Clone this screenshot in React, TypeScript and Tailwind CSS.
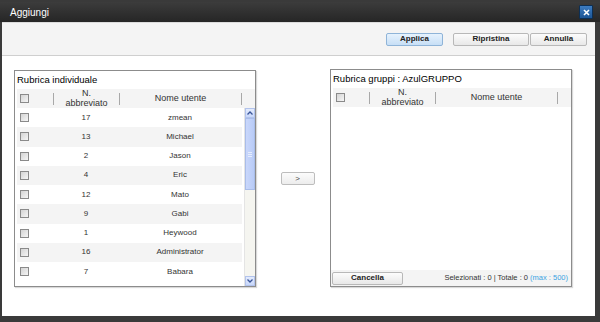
import React from 'react';

const rows = [
  { id: 17, name: 'zmean' },
  { id: 13, name: 'Michael' },
  { id: 2, name: 'Jason' },
  { id: 4, name: 'Eric' },
  { id: 12, name: 'Mato' },
  { id: 9, name: 'Gabi' },
  { id: 1, name: 'Heywood' },
  { id: 16, name: 'Administrator' },
  { id: 7, name: 'Babara' },
];

function Checkbox() {
  return (
    <div className="w-[9px] h-[9px] border border-[#8a8a8a] bg-gradient-to-br from-[#d4d4d4] to-[#f6f6f6]" />
  );
}

function Sep() {
  return <div className="w-px h-[12px] bg-[#a8a8a8]" />;
}

function Header() {
  return (
    <div className="flex items-center h-[19px] bg-[#f4f4f4] text-[9px] text-[#333] leading-[9.5px]">
      <div className="w-[36px] flex items-center pl-[3px]">
        <Checkbox />
      </div>
      <Sep />
      <div className="w-[65px] flex flex-col items-center">
        <span>N.</span>
        <span>abbreviato</span>
      </div>
      <Sep />
      <div className="w-[121px] text-center">Nome utente</div>
      <Sep />
    </div>
  );
}

function Btn({ children, w, blue }: { children: React.ReactNode; w: string; blue?: boolean }) {
  return (
    <button
      className={`${w} h-[13px] rounded-[2px] border text-[8px] font-bold text-[#222] leading-none flex items-center justify-center ${
        blue
          ? 'border-[#8fb4d8] bg-gradient-to-b from-[#e6f2fd] to-[#c7dff6]'
          : 'border-[#b8b8b8] bg-gradient-to-b from-[#fcfcfc] to-[#e8e8e8]'
      }`}
    >
      {children}
    </button>
  );
}

function Scrollbar() {
  return (
    <div className="w-[11px] flex flex-col bg-[#f5f5f0] border-l border-[#e4e4e4]">
      <div className="h-[10px] bg-gradient-to-b from-[#e3ebfd] to-[#c8d7fa] border border-[#b2c3ec] flex items-center justify-center">
        <svg width="6" height="4" viewBox="0 0 6 4">
          <path d="M0.5 3.5 L3 1 L5.5 3.5" stroke="#3a5599" strokeWidth="1.3" fill="none" />
        </svg>
      </div>
      <div className="h-[72px] bg-gradient-to-r from-[#c9d7fb] to-[#b8cbf7] border border-[#a9bde9] flex items-center justify-center">
        <div className="flex flex-col gap-[1px]">
          <div className="w-[4px] h-px bg-[#e6edfd]" />
          <div className="w-[4px] h-px bg-[#e6edfd]" />
          <div className="w-[4px] h-px bg-[#e6edfd]" />
        </div>
      </div>
      <div className="flex-1" />
      <div className="h-[10px] bg-gradient-to-b from-[#e3ebfd] to-[#c8d7fa] border border-[#b2c3ec] flex items-center justify-center">
        <svg width="6" height="4" viewBox="0 0 6 4">
          <path d="M0.5 0.5 L3 3 L5.5 0.5" stroke="#3a5599" strokeWidth="1.3" fill="none" />
        </svg>
      </div>
    </div>
  );
}

export default function App() {
  return (
    <div className="w-[600px] h-[322px] bg-[#3a3a3a] flex flex-col pt-[2px] font-['Liberation_Sans',Arial,sans-serif] overflow-hidden">
      {/* Title bar */}
      <div className="h-[20px] flex items-center justify-between pl-[10px] pr-[7px] bg-gradient-to-b from-[#3c3c3c] to-[#262626]">
        <span className="text-white text-[10px]">Aggiungi</span>
        <div className="w-[14px] h-[14px] rounded-[1px] border border-[#0c2f55] bg-gradient-to-b from-[#3d7cc0] to-[#1c5595] flex items-center justify-center">
          <svg width="7" height="7" viewBox="0 0 7 7">
            <path d="M1 1 L6 6 M6 1 L1 6" stroke="#fff" strokeWidth="1.6" />
          </svg>
        </div>
      </div>

      {/* Body */}
      <div className="flex-1 ml-[2px] mr-[5px] mb-[6px] bg-white flex flex-col">
        <div className="h-[34px] bg-[#f4f4f4] border-t border-[#dcdcdc] border-b border-b-[#cfcfcf] flex items-center justify-end pr-[8px]">
          <Btn w="w-[57px]" blue>Applica</Btn>
          <div className="w-[10px]" />
          <Btn w="w-[76px]">Ripristina</Btn>
          <div className="w-[1px]" />
          <Btn w="w-[57px]">Annulla</Btn>
        </div>

        <div className="flex items-center pl-[12px] pt-[14px]">
          {/* Left panel */}
          <div className="w-[242px] h-[217px] border border-[#8c8c8c] shadow-[1px_1px_1px_rgba(0,0,0,0.15)] flex flex-col pl-[2px]">
            <div className="h-[18px] flex items-center text-[9.5px] text-black">Rubrica individuale</div>
            <Header />
            <div className="flex flex-1 min-h-0">
              <div className="w-[226px] flex flex-col">
                {rows.map((r, i) => (
                  <div
                    key={r.id}
                    className={`h-[19.25px] flex items-center text-[8px] text-[#333] ${i % 2 === 1 ? 'bg-[#f4f4f4]' : 'bg-white'}`}
                  >
                    <div className="w-[36px] pl-[3px]">
                      <Checkbox />
                    </div>
                    <div className="w-[66px] text-center">{r.id}</div>
                    <div className="w-[122px] text-center">{r.name}</div>
                  </div>
                ))}
              </div>
              <div className="w-[2px]" />
              <Scrollbar />
            </div>
          </div>

          {/* Middle arrow */}
          <div className="w-[74px] flex justify-center pl-[9px]">
            <button className="w-[34px] h-[13px] rounded-[2px] border border-[#bdbdbd] bg-gradient-to-b from-[#fcfcfc] to-[#ececec] text-[8px] text-[#444] flex items-center justify-center leading-none">
              &gt;
            </button>
          </div>

          {/* Right panel */}
          <div className="w-[242px] h-[218px] -mt-[1px] border border-[#8c8c8c] shadow-[1px_1px_1px_rgba(0,0,0,0.15)] flex flex-col pl-[2px]">
            <div className="h-[18px] flex items-center text-[9.5px] text-black">Rubrica gruppi : AzulGRUPPO</div>
            <Header />
            <div className="flex-1" />
            <div className="h-[16px] -ml-[2px] bg-[#f4f4f4] flex items-center justify-between pl-[1px] pr-[3px]">
              <Btn w="w-[71px]">Cancella</Btn>
              <span className="text-[7.5px] text-[#333]">
                Selezionati : 0 | Totale : 0 <span className="text-[#3aa3e3]">(max : 500)</span>
              </span>
            </div>
          </div>
        </div>
      </div>
    </div>
  );
}
